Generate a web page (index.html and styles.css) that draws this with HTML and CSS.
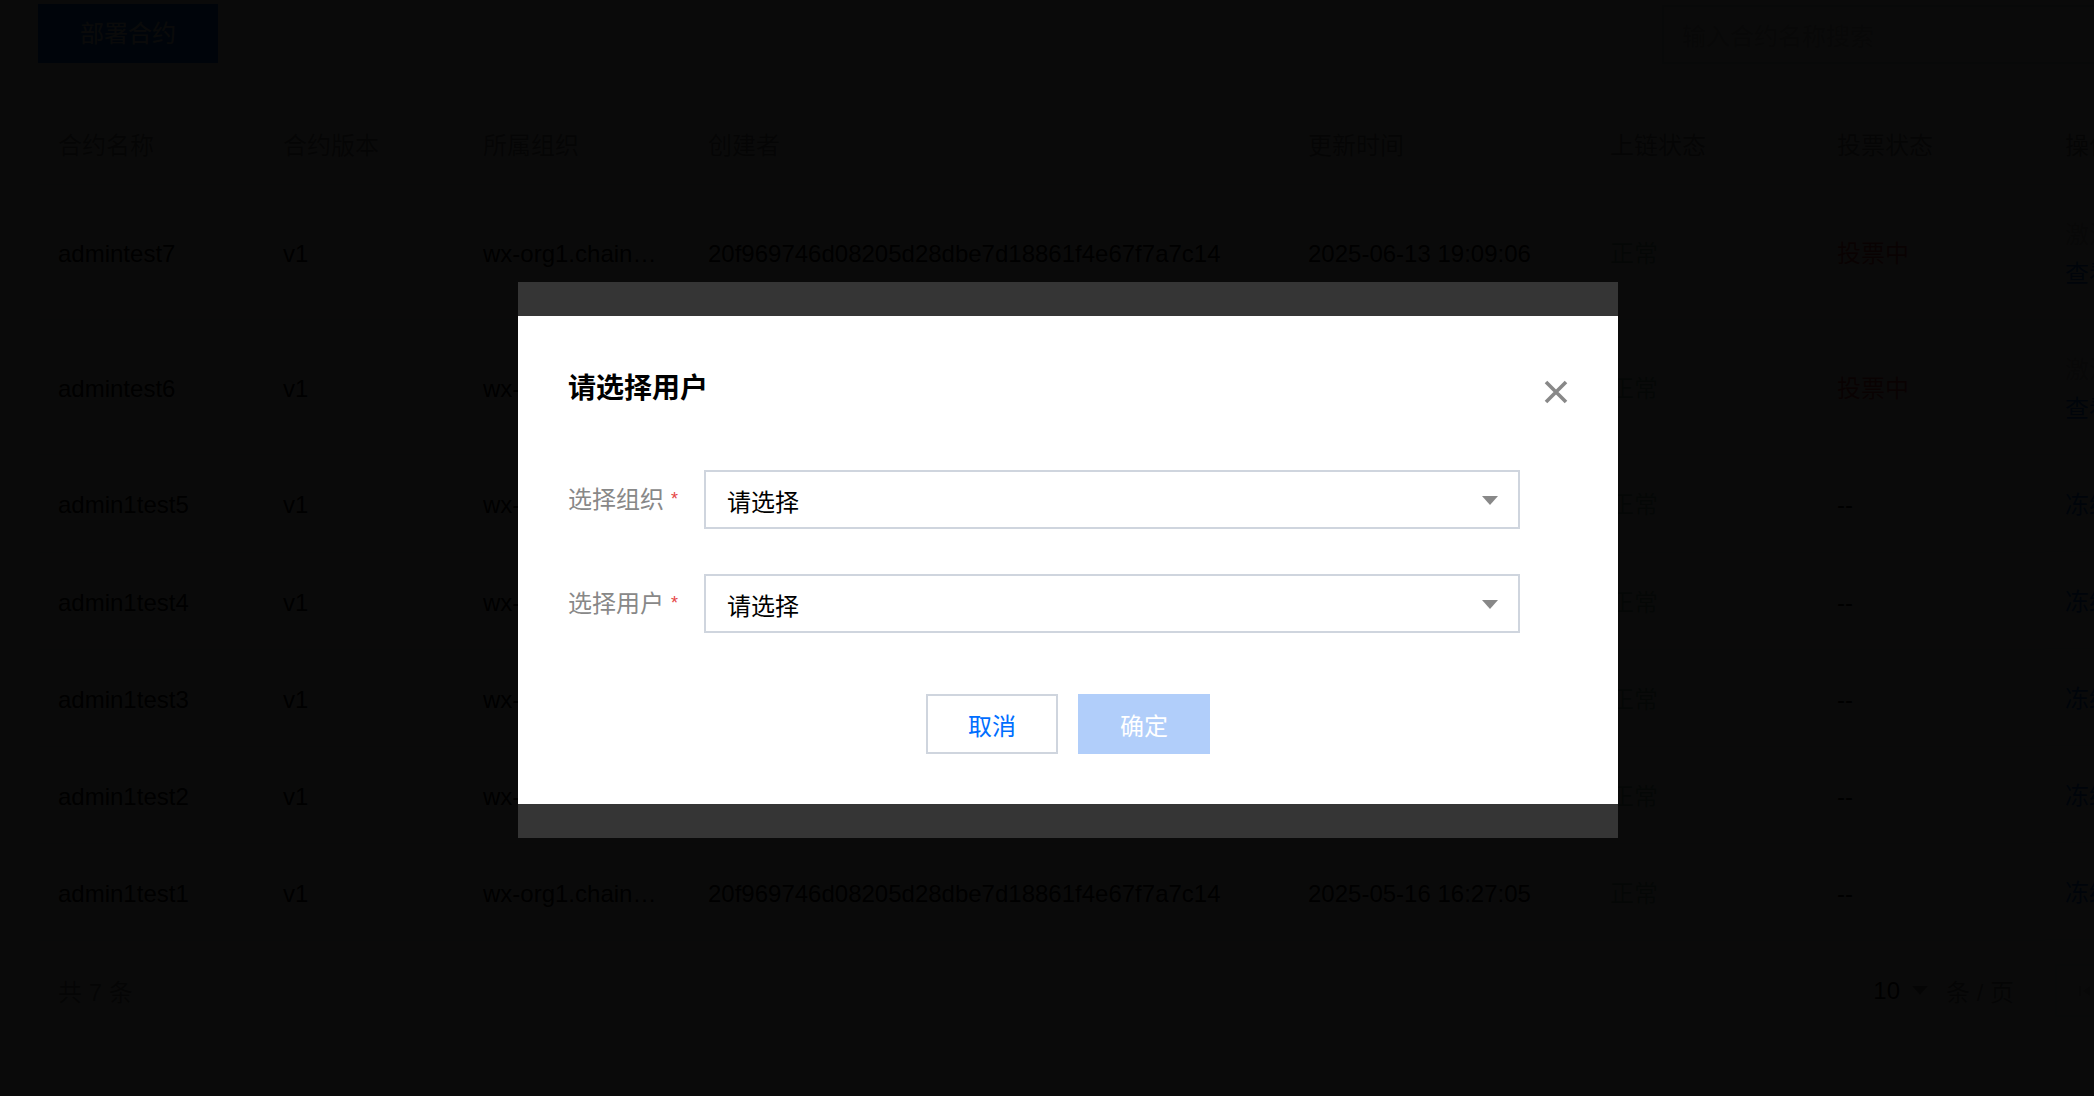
FILE: index.html
```html
<!DOCTYPE html>
<html lang="zh-CN">
<head>
    <meta charset="UTF-8">
    <meta name="viewport" content="width=device-width, initial-scale=1.0">
    <title>合约管理</title>
    <link rel="stylesheet" href="styles.css">
</head>
<body>
    <div class="page">
        <div class="toolbar">
            <button class="btn-deploy">部署合约</button>
            <div class="search">输入合约名称搜索</div>
        </div>

        <table class="table">
            <colgroup>
                <col style="width:225px"><col style="width:200px"><col style="width:225px"><col style="width:600px">
                <col style="width:302px"><col style="width:227px"><col style="width:228px"><col style="width:250px">
            </colgroup>
            <thead>
                <tr>
                    <th>合约名称</th><th>合约版本</th><th>所属组织</th><th>创建者</th>
                    <th>更新时间</th><th>上链状态</th><th>投票状态</th><th>操作</th>
                </tr>
            </thead>
            <tbody>
                <tr>
                    <td>admintest7</td><td>v1</td><td>wx-org1.chainmaker.org</td>
                    <td>20f969746d08205d28dbe7d18861f4e67f7a7c14</td><td>2025-06-13 19:09:06</td>
                    <td class="status-ok">正常</td><td class="status-voting">投票中</td>
                    <td class="ops ops--stack"><span class="link link--disabled">激活</span><span class="link">查看</span></td>
                </tr>
                <tr>
                    <td>admintest6</td><td>v1</td><td>wx-org1.chainmaker.org</td>
                    <td>20f969746d08205d28dbe7d18861f4e67f7a7c14</td><td>2025-06-13 18:52:41</td>
                    <td class="status-ok">正常</td><td class="status-voting">投票中</td>
                    <td class="ops ops--stack"><span class="link link--disabled">激活</span><span class="link">查看</span></td>
                </tr>
                <tr>
                    <td>admin1test5</td><td>v1</td><td>wx-org1.chainmaker.org</td>
                    <td>20f969746d08205d28dbe7d18861f4e67f7a7c14</td><td>2025-05-16 16:30:12</td>
                    <td class="status-ok">正常</td><td>--</td>
                    <td class="ops"><span class="link">冻结</span><span class="link">注销</span></td>
                </tr>
                <tr>
                    <td>admin1test4</td><td>v1</td><td>wx-org1.chainmaker.org</td>
                    <td>20f969746d08205d28dbe7d18861f4e67f7a7c14</td><td>2025-05-16 16:29:48</td>
                    <td class="status-ok">正常</td><td>--</td>
                    <td class="ops"><span class="link">冻结</span><span class="link">注销</span></td>
                </tr>
                <tr>
                    <td>admin1test3</td><td>v1</td><td>wx-org1.chainmaker.org</td>
                    <td>20f969746d08205d28dbe7d18861f4e67f7a7c14</td><td>2025-05-16 16:28:55</td>
                    <td class="status-ok">正常</td><td>--</td>
                    <td class="ops"><span class="link">冻结</span><span class="link">注销</span></td>
                </tr>
                <tr>
                    <td>admin1test2</td><td>v1</td><td>wx-org1.chainmaker.org</td>
                    <td>20f969746d08205d28dbe7d18861f4e67f7a7c14</td><td>2025-05-16 16:28:01</td>
                    <td class="status-ok">正常</td><td>--</td>
                    <td class="ops"><span class="link">冻结</span><span class="link">注销</span></td>
                </tr>
                <tr>
                    <td>admin1test1</td><td>v1</td><td>wx-org1.chainmaker.org</td>
                    <td>20f969746d08205d28dbe7d18861f4e67f7a7c14</td><td>2025-05-16 16:27:05</td>
                    <td class="status-ok">正常</td><td>--</td>
                    <td class="ops"><span class="link">冻结</span><span class="link">注销</span></td>
                </tr>
            </tbody>
        </table>

        <div class="footer">
            <span class="footer__total">共 7 条</span>
            <div class="pager">
                <span class="pager__size">10</span>
                <span class="pager__arrow"></span>
                <span class="pager__unit">条 / 页</span>
                <div class="pager__btns">
                    <span class="pager__btn">
                        <svg width="16" height="16" viewBox="0 0 16 16"><rect x="2" y="3" width="2" height="10" fill="#bbb"/><path d="M13 3 L6 8 L13 13 Z" fill="#bbb"/></svg>
                    </span>
                    <span class="pager__btn"></span>
                    <span class="pager__btn"></span>
                    <span class="pager__btn"></span>
                </div>
            </div>
        </div>
    </div>

    <div class="mask"></div>

    <div class="dialog">
        <div class="dialog__body">
            <h2 class="dialog__title">请选择用户</h2>
            <button class="dialog__close" aria-label="关闭">
                <svg width="26" height="26" viewBox="0 0 26 26">
                    <path d="M3 3 L23 23 M23 3 L3 23" stroke="#888" stroke-width="3.6" fill="none"/>
                </svg>
            </button>

            <div class="form">
                <div class="form__row">
                    <label class="form__label">选择组织<span class="form__required">*</span></label>
                    <div class="select">
                        <span>请选择</span>
                        <span class="select__arrow"></span>
                    </div>
                </div>
                <div class="form__row">
                    <label class="form__label">选择用户<span class="form__required">*</span></label>
                    <div class="select">
                        <span>请选择</span>
                        <span class="select__arrow"></span>
                    </div>
                </div>
            </div>

            <div class="dialog__actions">
                <button class="btn btn--default">取消</button>
                <button class="btn btn--primary" disabled>确定</button>
            </div>
        </div>
    </div>
</body>
</html>
```

FILE: styles.css
```css
* {
    margin: 0;
    padding: 0;
    box-sizing: border-box;
}

body {
    width: 2094px;
    height: 1096px;
    overflow: hidden;
    position: relative;
    background-color: #fff;
    font-family: "Liberation Sans", "Noto Sans CJK SC", sans-serif;
    font-size: 24px;
    color: #000;
}

.page {
    width: 2295px;
    padding: 4px 0 0 38px;
}

.toolbar {
    display: flex;
    justify-content: space-between;
    align-items: flex-start;
}

.btn-deploy {
    width: 180px;
    height: 59px;
    border: none;
    background-color: #006eff;
    color: #fff;
    font: inherit;
    line-height: 59px;
}

.search {
    width: 633px;
    height: 59px;
    margin-top: 1px;
    border: 2px solid #cfd5de;
    padding: 0 18px;
    display: flex;
    align-items: center;
    color: #bbb;
}

.table {
    width: 2257px;
    margin-top: 44px;
    border-collapse: collapse;
    table-layout: fixed;
}

.table th {
    padding: 19px 20px;
    line-height: 38px;
    text-align: left;
    font-weight: normal;
    color: #888;
    border-bottom: 1px solid #e7eaef;
}

.table td {
    padding: 30px 20px 26px;
    line-height: 40px;
    white-space: nowrap;
    overflow: hidden;
    text-overflow: ellipsis;
    vertical-align: middle;
    border-bottom: 1px solid #e7eaef;
}

.status-ok {
    color: #7fb89a;
}

.status-voting {
    color: #e54545;
}

.ops {
    display: flex;
    gap: 24px;
}

.table td.ops--stack {
    display: table-cell;
    line-height: 39px;
}

.ops--stack .link {
    display: block;
}

.link {
    color: #006eff;
}

.link--disabled {
    color: #bbb;
}

.footer {
    width: 2257px;
    height: 100px;
    padding-left: 20px;
    display: flex;
    align-items: center;
    justify-content: space-between;
}

.footer__total {
    color: #888;
}

.pager {
    display: flex;
    align-items: center;
}

.pager__size {
    color: #000;
}

.pager__arrow {
    width: 0;
    height: 0;
    margin-left: 12px;
    border-left: 8px solid transparent;
    border-right: 8px solid transparent;
    border-top: 9px solid #888;
}

.pager__unit {
    margin-left: 18px;
    color: #888;
}

.pager__btns {
    display: flex;
    margin-left: 41px;
}

.pager__btn {
    width: 60px;
    height: 53px;
    border: 2px solid #e7eaef;
    display: flex;
    align-items: center;
    justify-content: center;
}

.pager__btn + .pager__btn {
    border-left: none;
}

.mask {
    position: fixed;
    top: 0;
    left: 0;
    right: 0;
    bottom: 0;
    background-color: rgba(0, 0, 0, 0.96);
}

.dialog {
    position: absolute;
    top: 282px;
    left: 518px;
    width: 1100px;
    padding: 34px 0;
    background-color: #353535;
}

.dialog__body {
    position: relative;
    background-color: #fff;
    padding: 54px 50px 50px;
}

.dialog__title {
    font-size: 28px;
    line-height: 38px;
    font-weight: bold;
    color: #000;
}

.dialog__close {
    position: absolute;
    top: 63px;
    right: 49px;
    width: 26px;
    height: 26px;
    border: none;
    background: none;
    display: flex;
}

.form {
    margin-top: 62px;
}

.form__row {
    display: flex;
    align-items: center;
}

.form__row + .form__row {
    margin-top: 45px;
}

.form__label {
    width: 136px;
    color: #888;
    line-height: 36px;
}

.form__required {
    margin-left: 7px;
    color: #e54545;
    font-size: 18px;
    vertical-align: 3px;
}

.select {
    width: 816px;
    height: 59px;
    border: 2px solid #cfd5de;
    padding: 2px 20px 0 21px;
    display: flex;
    align-items: center;
    justify-content: space-between;
    color: #000;
}

.select__arrow {
    width: 0;
    height: 0;
    border-left: 8px solid transparent;
    border-right: 8px solid transparent;
    border-top: 9px solid #888;
}

.dialog__actions {
    margin-top: 61px;
    display: flex;
    justify-content: center;
    gap: 20px;
}

.btn {
    width: 132px;
    height: 60px;
    font: inherit;
    line-height: 56px;
    padding-top: 3px;
    border: 2px solid #cfd5de;
}

.btn--default {
    background-color: #fff;
    color: #006eff;
}

.btn--primary {
    background-color: #b1cefa;
    border-color: #b1cefa;
    color: #fff;
}
```
